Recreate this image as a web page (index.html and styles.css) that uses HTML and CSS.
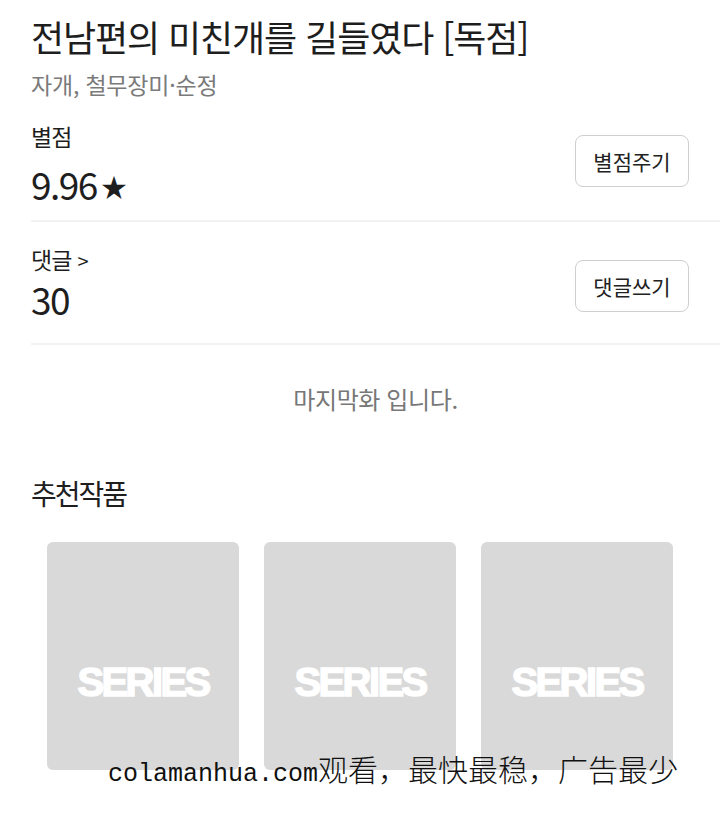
FILE: index.html
```html
<!DOCTYPE html>
<html lang="ko">
<head>
    <meta charset="UTF-8">
    <meta name="viewport" content="width=device-width, initial-scale=1.0">
    <title>전남편의 미친개를 길들였다 [독점]</title>
    <link rel="stylesheet" href="styles.css">
</head>
<body>
    <div class="page">
        <h1 class="title">전남편의 미친개를 길들였다 [독점]</h1>
        <div class="authors">자개, 철무장미·순정</div>

        <div class="row row-rating">
            <div class="info">
                <div class="label">별점</div>
                <div class="value">9.96<span class="star">★</span></div>
            </div>
            <button class="btn">별점주기</button>
        </div>

        <div class="row row-comment">
            <div class="info">
                <div class="label">댓글 <span class="arrow">&gt;</span></div>
                <div class="value">30</div>
            </div>
            <button class="btn">댓글쓰기</button>
        </div>

        <p class="last">마지막화 입니다.</p>

        <h2 class="section-title">추천작품</h2>
        <div class="cards">
            <div class="card"><span class="logo">SERIES</span></div>
            <div class="card"><span class="logo">SERIES</span></div>
            <div class="card"><span class="logo">SERIES</span></div>
        </div>
    </div>

    <div class="watermark"><span class="wm-latin">colamanhua.com</span>观看，最快最稳，广告最少</div>
</body>
</html>
```

FILE: styles.css
```css
body {
    margin: 0;
    font-family: "Noto Sans CJK KR", "Noto Sans", sans-serif;
    color: #1e1e1e;
    background: #fff;
}
.page {
    padding-left: 31px;
    padding-top: 12px;
}
.title {
    margin: 0;
    font-size: 36px;
    font-weight: 400;
    letter-spacing: -1.1px;
    line-height: 48px;
}
.authors {
    margin-top: 9px;
    font-size: 23px;
    letter-spacing: -0.2px;
    color: #7a7a7a;
    line-height: 30px;
}
.row {
    display: flex;
    justify-content: space-between;
    align-items: center;
    padding: 21px 31px 22px 0;
    border-bottom: 2px solid #f2f2f2;
}
.row-rating {
    margin-top: 1px;
    padding-top: 20px;
    padding-bottom: 12px;
}
.label {
    font-size: 23px;
    letter-spacing: -0.8px;
    line-height: 32px;
}
.arrow {
    font-size: 20px;
}
.value {
    font-size: 37px;
    letter-spacing: -1.5px;
    line-height: 44px;
}
.row-rating .value {
    margin-top: 10px;
}
.star {
    font-size: 26px;
    margin-left: 4px;
    vertical-align: 3px;
}
.btn {
    width: 114px;
    height: 52px;
    background: #fff;
    border: 1.5px solid #cfcfcf;
    border-radius: 8px;
    font-family: inherit;
    font-size: 21px;
    letter-spacing: 0;
    color: #222;
}
.row-rating .btn {
    margin-bottom: 6px;
}
.row-comment .btn {
    margin-top: 7px;
}
.last {
    margin: 36px 0 0;
    text-align: center;
    font-size: 24px;
    letter-spacing: -0.4px;
    color: #777;
}
.section-title {
    margin: 58px 0 0;
    font-size: 28px;
    font-weight: 400;
    letter-spacing: -2px;
    line-height: 38px;
}
.cards {
    display: flex;
    gap: 25px;
    margin: 30px 0 0 16px;
}
.card {
    width: 192px;
    height: 228px;
    border-radius: 6px;
    background: #d9d9d9;
    display: flex;
    align-items: center;
    justify-content: center;
}
.logo {
    color: #fff;
    font-family: "Liberation Sans", Arial, sans-serif;
    font-weight: 700;
    font-size: 40px;
    letter-spacing: -2.6px;
    -webkit-text-stroke: 1.5px #fff;
    margin-top: 52px;
}
.watermark {
    position: absolute;
    left: 108px;
    top: 748px;
    font-family: "Noto Sans CJK SC", sans-serif;
    font-weight: 300;
    font-size: 30px;
    color: #111;
    line-height: 40px;
}
.wm-latin {
    font-family: "Liberation Mono", monospace;
    font-size: 25px;
}
```
